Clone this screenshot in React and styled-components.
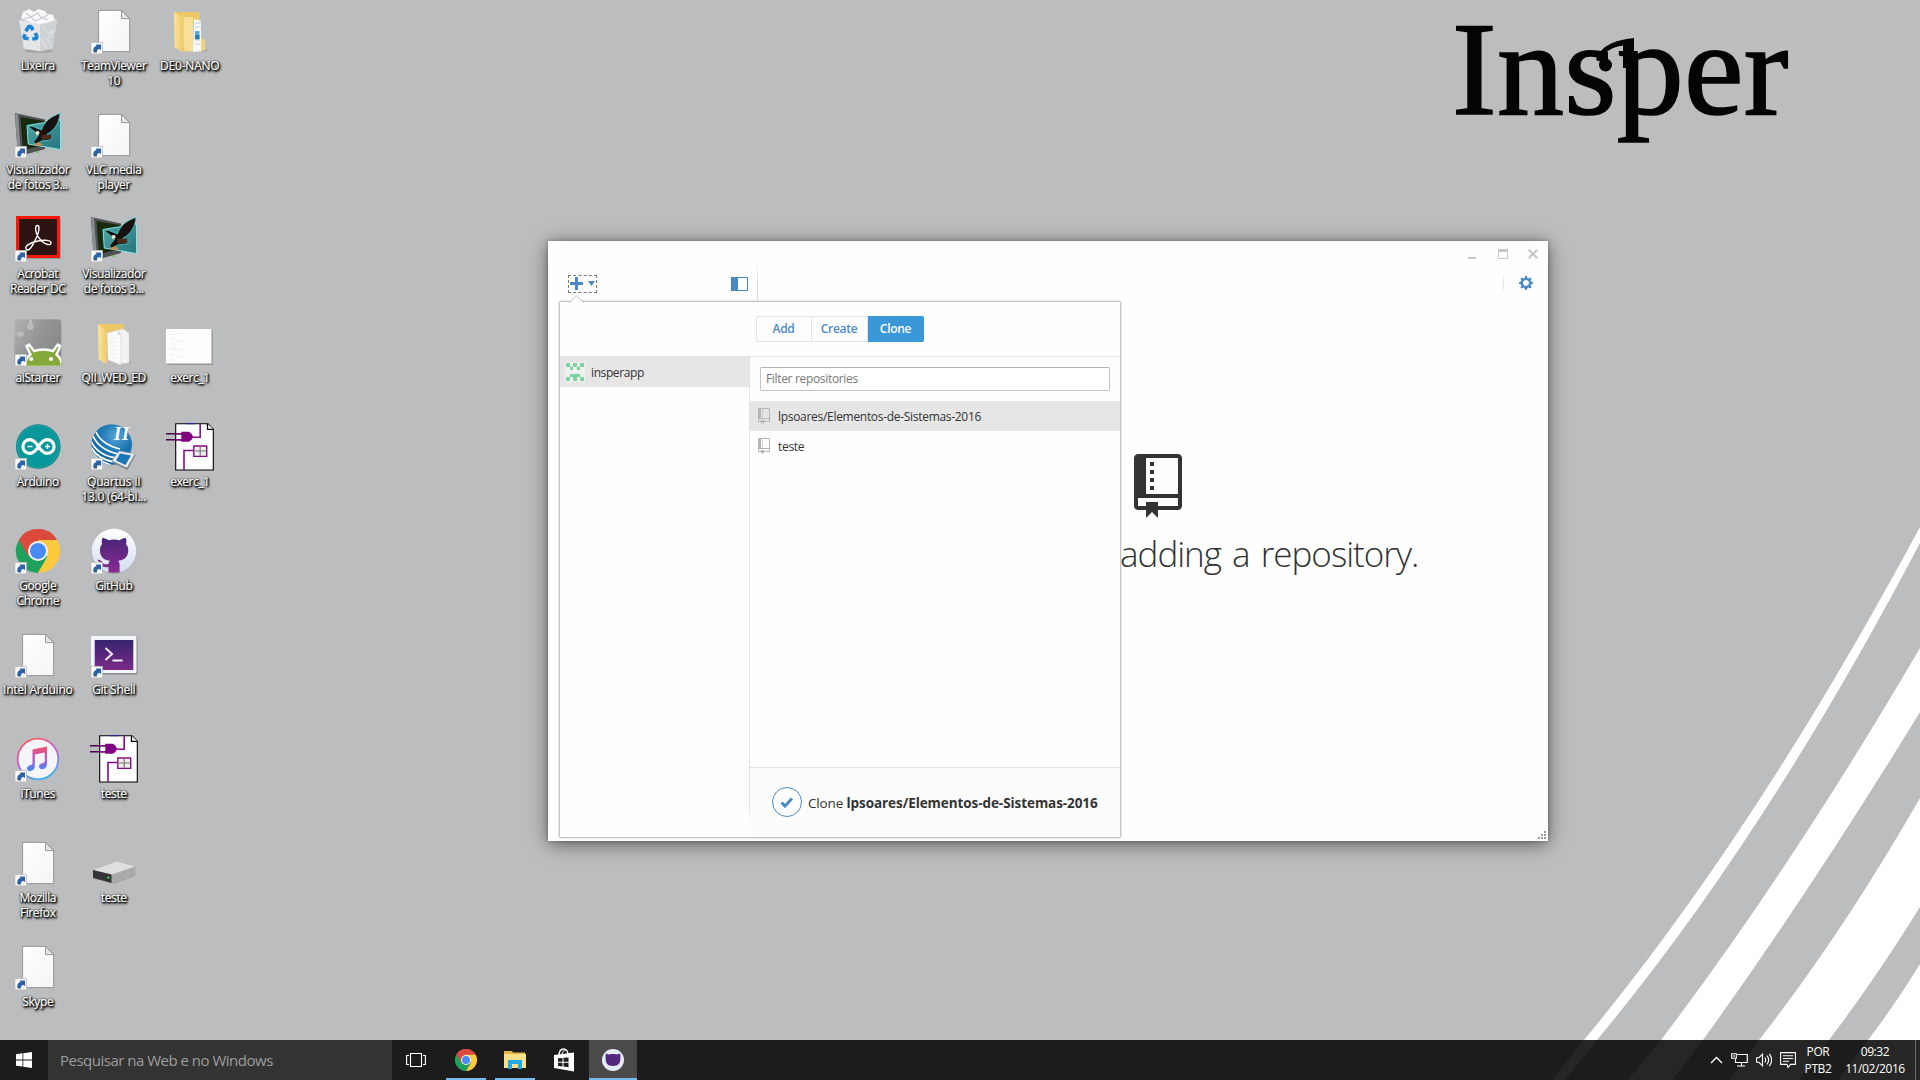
import React from 'react';
import styled, { createGlobalStyle, css } from 'styled-components';

const UI = '"Open Sans", "Noto Sans", sans-serif';

const GlobalStyle = createGlobalStyle`
  * { box-sizing: border-box; }
  body { margin: 0; font-family: ${UI}; font-size: 12px; overflow: hidden; }
`;

/* ---------- desktop ---------- */

const Desktop = styled.main`
  position: relative;
  width: 1920px;
  height: 1080px;
  overflow: hidden;
  background: #bcbdbf;
  display: flex;
  flex-direction: column;
`;

const Wallpaper = styled.svg`
  position: absolute;
  inset: 0;
  width: 1920px;
  height: 1080px;
`;

const Brand = styled.div`
  position: absolute;
  left: 1452px;
  top: 2px;
  font: 134px/134px "Liberation Serif", serif;
  color: #030405;
  -webkit-text-stroke: 1.7px #030405;
  letter-spacing: 0.3px;
  white-space: nowrap;
`;

const IconGrid = styled.div`
  position: relative;
  flex: 1;
  display: grid;
  grid-template-columns: repeat(3, 76px);
  grid-template-rows: repeat(10, 104px);
`;

const Shortcut = styled.div`
  grid-column: ${p => p.$col};
  grid-row: ${p => p.$row};
  display: flex;
  flex-direction: column;
  align-items: center;
  padding-top: 7px;

  svg { display: block; width: 48px; height: 48px; overflow: visible; }
`;

const Label = styled.span`
  margin-top: 3px;
  padding-right: 0.5px;
  font-size: 12px;
  line-height: 15px;
  letter-spacing: ${p => p.$track ?? -0.4}px;
  color: #fff;
  text-align: center;
  white-space: pre;
  -webkit-text-stroke: 0.2px #fff;
  text-shadow: 0 0 2px #000, 1px 1px 2px #000, 1px 1px 2px #000, 1px 2px 3px rgba(0, 0, 0, 0.7);
`;

const ShortcutBadge = () => (
  <g>
    <rect x="1" y="35.3" width="11.6" height="11.6" fill="#fdfdfd" stroke="#b4b4b4" strokeWidth=".7" />
    <path d="M3.700 45.6C2.600 42.2 3.700 39.6 6.600 39L5.500 37.400h5.600v5.900L9.600 41.9C7.500 42.1 6.700 43.400 7 45.600z" fill="#2f63a8" />
  </g>
);

const RecycleIcon = () => (
  <svg viewBox="0 0 48 48">
    <ellipse cx="25" cy="44" rx="14" ry="1.8" fill="#8d8e90" opacity=".6" />
    <path d="M5 13L24 15 43 12 38.6 41.5 26 44.6 10 41.4z" fill="#e3e5e7" />
    <path d="M26 15L43 12 38.6 41.5 26 44.6z" fill="#cfd2d5" />
    <path d="M5 13l5 5 6-3 5 9-7 4-5 13M27 17l7 9 7-3-8 9 5 8M27 31l6 11" fill="none" stroke="#f4f5f6" strokeWidth="1.2" opacity=".45" />
    <path d="M5 13L24 15.5 43 12 38 9 10 8.5z" fill="#b9bdc1" />
    <path d="M7 12l2-7 6-3 5 3 4-3 7 2 2 3 6 1 2 5-8 3-9 1z" fill="#f8f9fa" />
    <path d="M12 6l5 4 7-4 3 5 7-3M9 12l8-2 4 4 7-3 6 2" fill="none" stroke="#c5c9cd" strokeWidth="1.1" />
    <g fill="none" stroke="#1f83d6" strokeWidth="3.6">
      <path d="M11.800 24.300l2.600-4.300c.6-1 2.200-1 2.800 0l1.800 3.200" />
      <path d="M21.300 26l1.400 3.200c.5 1.400-.4 2.600-1.800 2.600h-2.600" />
      <path d="M14.600 31.800l-3.200-.5c-1.200-.3-1.500-1.500-1-2.500l.8-1.600" />
    </g>
  </svg>
);

const PageIcon = () => (
  <svg viewBox="0 0 48 48">
    <defs>
      <linearGradient id="page" x1="0" y1="0" x2="1" y2="1">
        <stop offset="0" stopColor="#ffffff" />
        <stop offset="1" stopColor="#f3f5f7" />
      </linearGradient>
    </defs>
    <path d="M8.6 3.4h23l8 8v33.2h-31z" fill="url(#page)" stroke="#8f9092" strokeWidth=".9" />
    <path d="M31.5 3.5v8.1h8.1z" fill="#e4e5e6" stroke="#8f9092" strokeWidth=".9" />
    <ShortcutBadge />
  </svg>
);

const FolderIcon = ({ variant }) => (
  <svg viewBox="0 0 48 48">
    <defs>
      <linearGradient id="folder" x1="0" y1="0" x2="1" y2="0">
        <stop offset="0" stopColor="#fbe59c" />
        <stop offset="1" stopColor="#efc968" />
      </linearGradient>
    </defs>
    <path d="M30 44l13-2-3 3z" fill="#999" opacity=".4" />
    <path d="M8 5h25.5v10H8z" fill="#ecc765" />
    {variant === 'photos' ? (
      <g>
        <path d="M33 10v20l6 3v10l-7 2V10z" fill="#f1d37d" />
        <path d="M28 12l7 2v30l-8 1z" fill="#f7f9fb" />
        <path d="M29 16h6M29 20h6M29 33h5M29 37h5" stroke="#c2cdd6" strokeWidth="1" />
        <path d="M29 24h4.500v8.500H29z" fill="#5aa9d2" />
        <path d="M29 28h4.500v4H29z" fill="#2b7fae" />
        <path d="M14 10l13 2v31l-9 2z" fill="#f3d67f" />
        <path d="M18 10h9v33l-3 2-6-6z" fill="#f9e096" />
      </g>
    ) : (
      <g>
        <path d="M27 11l6-1 6 4v30l-12 1z" fill="#f4f4f3" stroke="#cfcfcf" strokeWidth=".5" />
        <path d="M17 14l11-3 3 5v30l-13-5z" fill="#fafafa" stroke="#c9c9c9" strokeWidth=".5" />
        <path d="M19 19h9M19 23h9M19 27h9M19 31h9M19 35h9M20 39h8M32 19h6M32 24h6M32 29h6M32 34h6" stroke="#ebebeb" strokeWidth=".7" />
        <path d="M28 11v5h3" fill="#d6d6d6" />
      </g>
    )}
    <path d="M8 5l9 7v33.6L8.600 40z" fill="url(#folder)" />
  </svg>
);

const ViewerIcon = () => (
  <svg viewBox="0 0 48 48">
    <defs>
      <linearGradient id="viewer" x1="0" y1="0" x2="1" y2="1">
        <stop offset="0" stopColor="#54a7a9" />
        <stop offset="1" stopColor="#23747c" />
      </linearGradient>
    </defs>
    <path d="M.8 2L31 8.500V38L4 45.500z" fill="#4f5153" />
    <path d="M1 2.500l3 .6L7 44l-3 1.400z" fill="#8b8e90" />
    <path d="M6.500 6L30 10v24L9 39z" fill="#182a0d" />
    <path d="M13 14l14 1v19H14z" fill="#2c5410" opacity=".7" />
    <path d="M13 14.500L46.500 9v29.500L14.300 33z" fill="url(#viewer)" stroke="#86e2e4" strokeWidth="1" />
    <path d="M46.500 2C37 6 31 9 27.500 19l-8.500-3.500-5.500-.5 7 5.500 4 4-5 6 2 3 6-3.500 8-1 3-3-6-2.500c7-3.500 13-11 13.500-21.500z" fill="#17120f" stroke="#4fe0df" strokeWidth=".7" />
    <path d="M27 24l10-.5.500 4L28 29z" fill="#4d2b1c" />
    <path d="M21.500 20.500l3.500-.5.5 3-3 1.500z" fill="#f2ead8" />
    <path d="M19 33.500l6-2.500 4 3-3 1z" fill="#c78a4a" />
    <circle cx="23.500" cy="41" r="1" fill="#3ed32b" />
    <ShortcutBadge />
  </svg>
);

const AcrobatIcon = () => (
  <svg viewBox="0 0 48 48">
    <path d="M3 3h44v41H3z" fill="#777" opacity=".45" />
    <path d="M2 1h44v42H2z" fill="#f4190b" />
    <path d="M5 4h38v36H5z" fill="#2d1212" />
    <path d="M12.500 34.500c-3-2.500 3-7 11.500-8.500 7-1.300 13-.8 13 1.700 0 3.300-5.500 2-9.500-1.700-4.500-4-6.500-10.500-5.800-13.800.5-2.400 3-2.300 3.300 0 .6 4.300-3.300 12.500-6.400 18-2.200 4-4.600 5.600-6.100 4.300z" fill="none" stroke="#fff" strokeWidth="1.400" />
    <ShortcutBadge />
  </svg>
);

const StarterIcon = () => (
  <svg viewBox="0 0 48 48">
    <defs>
      <linearGradient id="puzzle" x1="0" y1="0" x2="1" y2=".6">
        <stop offset="0" stopColor="#b2b4b5" />
        <stop offset=".5" stopColor="#949697" />
        <stop offset="1" stopColor="#858788" />
      </linearGradient>
      <clipPath id="tile"><rect x=".3" y=".3" width="47" height="47" rx="4" /></clipPath>
    </defs>
    <g clipPath="url(#tile)">
      <path d="M0 0h48v48H0z" fill="url(#puzzle)" />
      <path d="M15 0v5c-3 1-2 6 1.500 6S21 6 18 5V0M0 14h4c1-3 6-2 6 1s-5 4-6 1H0" fill="#bcbdbf" />
      <path d="M11 48c0-6 2-10 5.500-12.500L12.500 27l2.700-1.400 4.800 6.500c5-2.200 14-2.200 19 0l4.800-6.500 2.700 1.400-4 8.500c4 3 5.500 7 5.500 12.500z" fill="#85a83a" stroke="#fff" strokeWidth="2.400" />
      <circle cx="17.300" cy="40" r="2" fill="#fff" />
      <circle cx="37" cy="40" r="2" fill="#fff" />
    </g>
    <ShortcutBadge />
  </svg>
);

const ScanIcon = () => (
  <svg viewBox="0 0 48 48">
    <path d="M1 11h46v35H1z" fill="#888" opacity=".7" />
    <path d="M0 10h45.500v34.500H0z" fill="#fdfdfd" />
    <path d="M3 12.500h8M4 15h14M3 19h6M5 21h10M12 22.500h7M5 25h6M3 29h7M5 31h12M3 35h5M4 37h13M12 38.500h6M3 41h7" stroke="#f0e4f4" strokeWidth=".8" strokeDasharray="2 .8" />
  </svg>
);

const ArduinoIcon = () => (
  <svg viewBox="0 0 48 48">
    <circle cx="24.300" cy="23.500" r="22.300" fill="#077e84" />
    <circle cx="24.300" cy="23.500" r="21" fill="#0a979c" stroke="#38b9bb" strokeWidth=".6" />
    <path d="M24.500 23.500C21 18 18.500 16.600 15.800 16.600a6.900 6.900 0 000 13.800c2.700 0 5.200-1.400 8.700-6.900 3.500-5.500 6-6.900 8.700-6.900a6.900 6.900 0 010 13.800c-2.700 0-5.200-1.400-8.700-6.900z" fill="none" stroke="#fff" strokeWidth="3.200" />
    <path d="M13.500 23.500h5M31 23.500h5M33.500 21v5" stroke="#fff" strokeWidth="1.400" />
    <ShortcutBadge />
  </svg>
);

const QuartusMark = styled.text`
  font: italic bold 18px "Liberation Serif", serif;
  fill: #fff;
`;

const QuartusIcon = () => (
  <svg viewBox="0 0 48 48">
    <defs>
      <radialGradient id="globe" cx=".6" cy=".3" r=".75">
        <stop offset="0" stopColor="#5aa5d6" />
        <stop offset=".5" stopColor="#1d78b5" />
        <stop offset="1" stopColor="#0f5d98" />
      </radialGradient>
      <clipPath id="globeClip"><circle cx="21.700" cy="21.500" r="20.300" /></clipPath>
    </defs>
    <circle cx="21.700" cy="21.500" r="20.300" fill="url(#globe)" />
    <g clipPath="url(#globeClip)" fill="none" stroke="#fff" strokeWidth="1.800">
      <path d="M6 9c4 9 12 14 24 17M3 13c4 9 12 15 25 18M1 18c4 9 12 15 25 17M1 24c4 8 12 13 23 15M2 30c5 6 11 10 19 12" />
    </g>
    <path d="M22 38l7-10 16 3-8 14z" fill="#e9ecef" stroke="#9aa1a8" strokeWidth=".6" />
    <path d="M26 37.500l4-7 11 2-5.500 9.500z" fill="#1b76b8" />
    <path d="M22 38l15 7 8-14 .3 1.500L37.500 47 22 39.500z" fill="#7b838b" />
    <QuartusMark x="24" y="16.500" textLength="15">II</QuartusMark>
    <ShortcutBadge />
  </svg>
);

const CircuitIcon = () => (
  <svg viewBox="0 0 48 48">
    <path d="M9.700.700H42l5.300 5.500v40.800H9.700z" fill="#fff" stroke="#000" strokeWidth="1.100" />
    <path d="M41.500.700v5.600h5.800" fill="#fff" stroke="#000" strokeWidth="1.300" />
    <path d="M20 .700h9" stroke="#2222b0" strokeWidth="1" />
    <path d="M0 10.800h16M0 16.800h16" stroke="#4b004b" strokeWidth="1.500" />
    <path d="M10 10.800h6M10 16.800h6M25 14.200h9.200V1M18 47V27.500h9" fill="none" stroke="#880d88" strokeWidth="1.600" />
    <path d="M15.300 8.800h7.500c2.200 1 3.700 3 4.200 5-.5 2-2 4-4.200 5h-7.500z" fill="#800080" />
    <path d="M27.800 23h12.900v10.400H27.800z" fill="#eee" stroke="#880d88" strokeWidth="1.400" />
    <path d="M34.200 23.700v9M28.500 28h11.500" stroke="#777" strokeWidth="1.200" />
  </svg>
);

const ChromeShape = () => (
  <g>
    <path d="M24 24L4.900 13A22 22 0 0143.100 13z" fill="#db4a3d" />
    <path d="M24 24l9.500 5.500L24 46A22 22 0 014.900 13z" fill="#1fa15d" />
    <path d="M24 13h19.100A22 22 0 0124 46l9.500-16.500z" fill="#fdca3d" />
    <path d="M14.500 29.500L4.900 13A22 22 0 0143.100 13H24z" fill="#db4a3d" />
    <circle cx="24" cy="24" r="10" fill="#f4f4f4" />
    <circle cx="24" cy="24" r="8" fill="#4a8af4" />
  </g>
);

const ChromeIcon = () => (
  <svg viewBox="0 0 48 48"><ChromeShape /><ShortcutBadge /></svg>
);

const OCTOCAT = 'M8 0C3.58 0 0 3.58 0 8c0 3.54 2.29 6.53 5.47 7.59.4.07.55-.17.55-.38 0-.19-.01-.82-.01-1.49-2.01.37-2.53-.49-2.69-.94-.09-.23-.48-.94-.82-1.130-.28-.15-.68-.52-.01-.53.63-.01 1.080.58 1.230.82.72 1.210 1.870.87 2.330.66.07-.52.28-.87.51-1.070-1.780-.2-3.640-.89-3.640-3.950 0-.87.31-1.590.82-2.150-.08-.2-.36-1.020.08-2.120 0 0 .67-.21 2.200.82.64-.18 1.320-.27 2-.27s1.360.09 2 .27c1.530-1.040 2.200-.82 2.200-.82.44 1.100.16 1.920.08 2.120.51.56.82 1.270.82 2.150 0 3.070-1.870 3.750-3.650 3.950.29.25.54.73.54 1.480 0 1.070-.01 1.930-.01 2.200 0 .21.15.46.55.38A8.01 8.01 0 0 0 16 8c0-4.420-3.580-8-8-8z';

const GitHubIcon = () => (
  <svg viewBox="0 0 48 48">
    <defs>
      <linearGradient id="cat" x1="0" y1="0" x2="0" y2="1">
        <stop offset="0" stopColor="#3a2470" />
        <stop offset="1" stopColor="#8a2b92" />
      </linearGradient>
      <linearGradient id="disc" x1="0" y1="0" x2="0" y2="1">
        <stop offset="0" stopColor="#ffffff" />
        <stop offset="1" stopColor="#d3ddf3" />
      </linearGradient>
    </defs>
    <circle cx="24" cy="24.500" r="22.500" fill="#85868a" opacity=".6" />
    <circle cx="24" cy="24" r="21.600" fill="url(#cat)" />
    <path transform="translate(1.800 1.800) scale(2.780)" d={OCTOCAT} fill="url(#disc)" />
    <ShortcutBadge />
  </svg>
);

const GitShellIcon = () => (
  <svg viewBox="0 0 48 48">
    <defs>
      <linearGradient id="shell" x1="0" y1="0" x2="0" y2="1">
        <stop offset="0" stopColor="#35246f" />
        <stop offset="1" stopColor="#7b2a87" />
      </linearGradient>
    </defs>
    <rect x="1" y="5.500" width="46.500" height="38" rx="1" fill="#77787a" opacity=".7" />
    <rect x="1" y="5" width="45.500" height="37" rx="1" fill="#f2f5fc" />
    <path d="M4.700 9h38.600v30H4.700z" fill="url(#shell)" />
    <path d="M15.500 17l6.500 6-6.500 6M22.500 29.500h10" fill="none" stroke="#f4effa" strokeWidth="2" />
    <ShortcutBadge />
  </svg>
);

const ITunesIcon = () => (
  <svg viewBox="0 0 48 48">
    <defs>
      <linearGradient id="ring" x1=".3" y1="0" x2=".7" y2="1">
        <stop offset="0" stopColor="#fb5b62" />
        <stop offset=".45" stopColor="#c55adf" />
        <stop offset="1" stopColor="#2fb5f7" />
      </linearGradient>
      <linearGradient id="note" x1="0" y1="0" x2="0" y2="1">
        <stop offset="0" stopColor="#f6506a" />
        <stop offset=".55" stopColor="#b558d8" />
        <stop offset="1" stopColor="#3a8ff5" />
      </linearGradient>
    </defs>
    <circle cx="24" cy="24" r="20.300" fill="#f4f5f8" stroke="url(#ring)" strokeWidth="1.800" />
    <path d="M18.500 14.500L33 11.500v17.700c0 2.400-1.400 4.300-4 4.900-2.400.4-4-.8-4-2.500 0-1.900 1.600-3.100 3.800-3.500 1.400-.3 2-.6 2-2V17.500l-10 2v11.700c0 2.400-1.400 4.200-3.900 4.700-2.300.4-3.900-.8-3.900-2.500 0-1.900 1.500-3.100 3.600-3.500 1.400-.3 1.900-.6 1.900-2z" fill="url(#note)" />
    <ShortcutBadge />
  </svg>
);

const DriveIcon = () => (
  <svg viewBox="0 0 48 48">
    <path d="M22 43.500L46 34l-1 3-21 8z" fill="#8e8f91" opacity=".5" />
    <path d="M3 31l24-8.500L45.500 27v7L21.500 44 3 39z" fill="#a7a9ab" />
    <path d="M3 31l24-8.500L45.500 27.500 21.500 35.500z" fill="#dedfe1" />
    <path d="M3 31l18.500 4.500V44L3 39z" fill="#333537" />
    <path d="M17 38.500h2.500" stroke="#3fe03f" strokeWidth="1.500" />
  </svg>
);

const SHORTCUTS = [
  { col: 1, row: 1, label: 'Lixeira', Icon: RecycleIcon },
  { col: 1, row: 2, label: 'Visualizador\nde fotos 3...', Icon: ViewerIcon },
  { col: 1, row: 3, label: 'Acrobat\nReader DC', Icon: AcrobatIcon },
  { col: 1, row: 4, label: 'aiStarter', Icon: StarterIcon },
  { col: 1, row: 5, label: 'Arduino', Icon: ArduinoIcon },
  { col: 1, row: 6, label: 'Google\nChrome', Icon: ChromeIcon },
  { col: 1, row: 7, label: 'Intel Arduino', Icon: PageIcon, track: -0.25 },
  { col: 1, row: 8, label: 'iTunes', Icon: ITunesIcon },
  { col: 1, row: 9, label: 'Mozilla\nFirefox', Icon: PageIcon },
  { col: 1, row: 10, label: 'Skype', Icon: PageIcon },
  { col: 2, row: 1, label: 'TeamViewer\n10', Icon: PageIcon, track: -0.35 },
  { col: 2, row: 2, label: 'VLC media\nplayer', Icon: PageIcon },
  { col: 2, row: 3, label: 'Visualizador\nde fotos 3...', Icon: ViewerIcon },
  { col: 2, row: 4, label: 'QII_WED_ED', Icon: FolderIcon },
  { col: 2, row: 5, label: 'Quartus II\n13.0 (64-bi...', Icon: QuartusIcon, track: -0.2 },
  { col: 2, row: 6, label: 'GitHub', Icon: GitHubIcon },
  { col: 2, row: 7, label: 'Git Shell', Icon: GitShellIcon, track: -0.3 },
  { col: 2, row: 8, label: 'teste', Icon: CircuitIcon },
  { col: 2, row: 9, label: 'teste', Icon: DriveIcon },
  { col: 3, row: 1, label: 'DE0-NANO', Icon: FolderIcon, variant: 'photos', track: -0.2 },
  { col: 3, row: 4, label: 'exerc_1', Icon: ScanIcon, track: -0.5 },
  { col: 3, row: 5, label: 'exerc_1', Icon: CircuitIcon, track: -0.5 },
];

/* ---------- application window ---------- */

const Window = styled.section`
  position: absolute;
  left: 548px;
  top: 241px;
  width: 1000px;
  height: 600px;
  background: #fefefe;
  box-shadow: 0 3px 18px rgba(0, 0, 0, 0.5), 0 0 4px rgba(0, 0, 0, 0.3);
  display: flex;
  flex-direction: column;
  color: #333;
`;

const Caption = styled.header`
  height: 21px;
  display: flex;
  justify-content: flex-end;
  align-items: flex-start;
  gap: 20px;
  padding: 8px 10px 0 0;
  svg { display: block; width: 10px; height: 10px; }
`;

const Toolbar = styled.div`
  display: flex;
  height: 40px;
`;

const ToolbarSide = styled.div`
  width: 210px;
  display: flex;
  justify-content: space-between;
  align-items: flex-start;
  padding: 13px 9px 0 20px;
  border-right: 1px solid;
  border-image: linear-gradient(#fff, #ddd 50%) 1;
`;

const AddButton = styled.button`
  width: 29px;
  height: 18px;
  padding: 0;
  background: none;
  border: 1px dashed #777;
  svg { display: block; width: 27px; height: 16px; }
`;

const PanelToggle = styled.button`
  width: 17px;
  height: 14px;
  margin-top: 2px;
  padding: 0;
  background: linear-gradient(90deg, #4b89c5 6px, #fff 6px);
  border: 1px solid #4b89c5;
`;

const ToolbarMain = styled.div`
  flex: 1;
  display: flex;
  justify-content: flex-end;
  align-items: flex-start;
  padding: 11px 15px 0 0;
`;

const Settings = styled.div`
  padding: 2px 0 2px 15px;
  border-left: 1px solid;
  border-image: linear-gradient(#fff, #ddd 50%, #fff) 1;
  svg { display: block; width: 14px; height: 16px; fill: #4b89c5; }
`;

const Welcome = styled.div`
  flex: 1;
  margin-left: 572px;
  padding-top: 152px;
  overflow: hidden;
  svg { display: block; width: 48px; height: 64px; margin-left: 14px; fill: #333; }
`;

const WelcomeText = styled.h1`
  margin: 12px 0 0;
  font-size: 35px;
  line-height: 48px;
  font-weight: 300;
  letter-spacing: -1px;
  word-spacing: 3px;
  white-space: nowrap;
`;

const Grip = styled.svg`
  position: absolute;
  right: 1px;
  bottom: 1px;
  width: 10px;
  height: 10px;
  fill: #999;
`;

const Popover = styled.div`
  position: absolute;
  left: 11px;
  top: 60px;
  width: 562px;
  height: 537px;
  background: #fefefe;
  border: 1px solid #c4c4c4;
  border-radius: 2px;
  box-shadow: 0 0 2px rgba(0, 0, 0, 0.25);
  display: flex;
  flex-direction: column;
`;

const PopoverArrow = styled.svg`
  position: absolute;
  left: 9px;
  top: -7px;
  width: 15px;
  height: 8px;
`;

const PopoverHead = styled.div`
  height: 55px;
  flex: none;
  padding: 14px 0 0 196px;
  border-bottom: 1px solid #e2e2e2;
`;

const Tabs = styled.div`
  display: grid;
  grid-template-columns: 56px 56px 56px;
  height: 25px;
`;

const Tab = styled.button`
  padding: 0 1px 1px 0;
  font: 600 12px/23px ${UI};
  letter-spacing: ${p => p.$track ?? -0.3}px;
  color: #4b89c5;
  background: #fefefe;
  border: 1px solid #e2e2e2;
  & + & { border-left: 0; }
  &:first-child { border-radius: 2px 0 0 2px; }
  ${p => p.$active && css`
    padding-right: 0;
    color: #fff;
    background: #3a98d8;
    border-color: #3a98d8;
    border-radius: 0 2px 2px 0;
  `}
`;

const PopoverBody = styled.div`
  flex: 1;
  display: flex;
`;

const Accounts = styled.div`
  width: 190px;
  border-right: 1px solid;
  border-image: linear-gradient(#e2e2e2 94%, #fff 96%) 1;
`;

const Account = styled.div`
  height: 30px;
  display: flex;
  align-items: center;
  padding-left: 5px;
  gap: 6px;
  background: #e6e6e6;
  letter-spacing: -0.4px;
  svg { width: 20px; height: 20px; }
`;

const Repos = styled.div`
  flex: 1;
  display: flex;
  flex-direction: column;
`;

const FilterInput = styled.input`
  height: 24px;
  margin: 10px 10px 10px;
  padding: 0 5px 2px;
  border: 1px solid #c3c3c3;
  border-top-color: #b0b0b0;
  border-radius: 2px;
  background: #fff;
  font: 12px ${UI};
  letter-spacing: -0.33px;
  &::placeholder { color: #777; opacity: 1; }
`;

const Repo = styled.div`
  height: 30px;
  display: flex;
  align-items: center;
  padding-left: 8px;
  gap: 8px;
  letter-spacing: ${p => p.$track ?? -0.3}px;
  background: ${p => (p.$selected ? '#e6e6e6' : 'transparent')};
  svg { width: 12px; height: 16px; fill: #b5b5b5; }
`;

const CloneBar = styled.div`
  height: 70px;
  margin-top: auto;
  border-top: 1px solid #e2e2e2;
  background: #fcfcfc;
  display: flex;
  align-items: center;
  padding-left: 21px;
  gap: 5px;
  font-size: 13.5px;
  letter-spacing: -0.15px;
  white-space: pre;
  svg { width: 32px; height: 32px; margin-bottom: 1px; }
  b { letter-spacing: -0.07px; }
`;

const REPO = 'M5 9H4V8h1v1zm0-3H4v1h1V6zm0-2H4v1h1V4zm0-2H4v1h1V2zm7-1v12c0 .55-.45 1-1 1H6v2l-1.5-1.5L3 16v-2H1c-.55 0-1-.45-1-1V1c0-.55.45-1 1-1h10c.55 0 1 .45 1 1zm-1 10H1v2h2v-1h3v1h5v-2zm0-10H3v9h8V1z';
const GEAR = 'M14 8.77v-1.6l-1.94-.64-.45-1.09.88-1.84-1.13-1.13-1.81.91-1.09-.45-.69-1.92h-1.6l-.63 1.94-1.11.45-1.84-.88-1.13 1.13.91 1.81-.45 1.09L0 7.23v1.59l1.94.64.45 1.09-.88 1.84 1.13 1.13 1.81-.91 1.09.45.69 1.92h1.59l.63-1.94 1.11-.45 1.84.88 1.13-1.13-.92-1.81.47-1.09L14 8.75v.02zM7 11c-1.66 0-3-1.34-3-3s1.34-3 3-3 3 1.34 3 3-1.34 3-3 3z';

const RepoIcon = () => <svg viewBox="0 0 12 16"><path d={REPO} fillRule="evenodd" /></svg>;

const Identicon = () => (
  <svg viewBox="0 0 20 20" shapeRendering="crispEdges">
    <path d="M0 0h20v20H0z" fill="#f0f0f0" />
    {['X.X.X', '.X.X.', '.....', '.XXX.', 'X.X.X'].map((line, r) =>
      [...line].map((c, i) => c === 'X' && (
        <rect key={`${r}-${i}`} x={1.25 + i * 3.5} y={1.25 + r * 3.5} width="3.5" height="3.5" fill="#7cd3a0" />
      )))}
  </svg>
);

/* ---------- taskbar ---------- */

const Taskbar = styled.footer`
  position: relative;
  height: 40px;
  flex: none;
  display: flex;
  background: rgba(0, 0, 0, 0.85);
  color: #fff;
`;

const TaskButton = styled.button`
  width: 48px;
  height: 40px;
  margin-left: ${p => p.$gap ?? 0}px;
  padding: 0;
  border: 0;
  background: ${p => (p.$active ? '#4a4a4a' : 'transparent')};
  display: grid;
  place-items: center;
  box-shadow: ${p => (p.$active ? 'inset 0 -2px #76b9ed' : 'none')};
  ${p => p.$running && css`
    background: linear-gradient(#76b9ed, #76b9ed) 4px 38px / 40px 2px no-repeat;
  `}
  svg { display: block; overflow: visible; }
`;

const Search = styled.div`
  width: 344px;
  padding-left: 12px;
  background: #333;
  color: #9d9d9d;
  font-size: 15px;
  line-height: 40px;
  letter-spacing: -0.5px;
`;

const Tray = styled.div`
  margin-left: auto;
  display: flex;
  align-items: center;
  font-size: 12px;
  line-height: 17px;
  letter-spacing: -0.4px;
  text-align: center;
  svg { display: block; fill: none; stroke: #fff; stroke-width: 1.1; margin-right: 8px; }
`;

const Language = styled.div`
  width: 44px;
  margin-left: -8px;
`;

const Clock = styled.div`
  width: 70px;
`;

const ShowDesktop = styled.div`
  width: 5px;
  height: 40px;
  margin-left: 5px;
  border-left: 1px solid #6a6a6a;
`;

export default function App() {
  return (
    <>
      <GlobalStyle />
      <Desktop>
        <Wallpaper viewBox="0 0 1920 1080" fill="#fff">
          <path d="M1552 1080L1584 1040Q1755 834 1920 527V543Q1765 838 1597 1040L1565 1080z" />
          <path d="M1628 1080L1661 1040Q1790 870 1920 648V712Q1811 890 1703 1040L1672 1080z" />
          <path d="M1730 1080L1759 1040Q1842 934 1920 798V907Q1876 978 1829 1040L1799 1080z" />
          <path d="M1838 1080L1868 1040Q1895 1005 1920 964V1080z" />
          <path d="M1596 60C1600 47 1613 40 1634 38V68H1623V45.500C1612 47 1603 52 1601 62z" fill="#030405" />
          <circle cx="1605.500" cy="65" r="6.500" fill="#030405" />
        </Wallpaper>
        <Brand>Insper</Brand>

        <IconGrid>
          {SHORTCUTS.map(({ col, row, label, Icon, variant, track }) => (
            <Shortcut key={`${col}-${row}`} $col={col} $row={row}>
              <Icon variant={variant} />
              <Label $track={track}>{label}</Label>
            </Shortcut>
          ))}
        </IconGrid>

        <Window>
          <Caption>
            <svg viewBox="0 0 10 10"><path d="M0 8h8v2H0z" fill="#c8c8c8" /></svg>
            <svg viewBox="0 0 10 10"><path d="M0 0h10v10H0zM1 3v6h8V3z" fillRule="evenodd" fill="#c8c8c8" /></svg>
            <svg viewBox="0 0 10 10"><path d="M.8.800l8.400 8.400M9.200.800L.8 9.200" stroke="#c8c8c8" strokeWidth="2.200" /></svg>
          </Caption>
          <Toolbar>
            <ToolbarSide>
              <AddButton>
                <svg viewBox="0 0 27 16" fill="#4b89c5">
                  <path d="M6 1h3v5h5v3H9v5H6V9H1V6h5z" />
                  <path d="M19 5h7l-3.500 5z" />
                </svg>
              </AddButton>
              <PanelToggle />
            </ToolbarSide>
            <ToolbarMain>
              <Settings><svg viewBox="0 0 14 16"><path d={GEAR} /></svg></Settings>
            </ToolbarMain>
          </Toolbar>
          <Welcome>
            <RepoIcon />
            <WelcomeText>adding a repository.</WelcomeText>
          </Welcome>
          <Grip viewBox="0 0 10 10">
            <path d="M7 1h2v2H7zM7 4h2v2H7zM4 4h2v2H4zM7 7h2v2H7zM4 7h2v2H4zM1 7h2v2H1z" />
          </Grip>

          <Popover>
            <PopoverArrow viewBox="0 0 15 8">
              <path d="M1 7.500L7.500 1 14 7.500V8H1z" fill="#fefefe" />
              <path d="M.5 7.500L7.500.800l7 6.700" fill="none" stroke="#c4c4c4" />
            </PopoverArrow>
            <PopoverHead>
              <Tabs>
                <Tab>Add</Tab>
                <Tab>Create</Tab>
                <Tab $active>Clone</Tab>
              </Tabs>
            </PopoverHead>
            <PopoverBody>
              <Accounts>
                <Account><Identicon />insperapp</Account>
              </Accounts>
              <Repos>
                <FilterInput placeholder="Filter repositories" />
                <Repo $selected><RepoIcon />lpsoares/Elementos-de-Sistemas-2016</Repo>
                <Repo><RepoIcon />teste</Repo>
                <CloneBar>
                  <svg viewBox="0 0 32 32">
                    <circle cx="16" cy="16" r="14.500" fill="#fff" stroke="#4b89c5" />
                    <path d="M10.500 16.500l3.500 3.500 7-7.500" fill="none" stroke="#4b89c5" strokeWidth="3" />
                  </svg>
                  <span>Clone <b>lpsoares/Elementos-de-Sistemas-2016</b></span>
                </CloneBar>
              </Repos>
            </PopoverBody>
          </Popover>
        </Window>

        <Taskbar>
          <TaskButton>
            <svg width="16" height="16" viewBox="0 0 16 16" fill="#fff">
              <path d="M0 2.200L6.500 1.300v6.200H0zM7.300 1.200L16 0v7.500H7.300zM0 8.400h6.500v6.200L0 13.700zM7.300 8.400H16V16l-8.700-1.200z" />
            </svg>
          </TaskButton>
          <Search>Pesquisar na Web e no Windows</Search>
          <TaskButton>
            <svg width="20" height="14" viewBox="0 0 20 14" fill="none" stroke="#fff" strokeWidth="1.100">
              <path d="M4.500.500h11v13h-11zM3 2.500H.6v9H3M17 2.500h2.400v9H17" />
            </svg>
          </TaskButton>
          <TaskButton $running $gap={2}>
            <svg width="24" height="24" viewBox="0 0 48 48"><ChromeShape /></svg>
          </TaskButton>
          <TaskButton $running $gap={1}>
            <svg width="22" height="18" viewBox="0 0 22 18">
              <path d="M0 0h8l1 1.500h12V5H0z" fill="#e8b64a" />
              <path d="M0 3h22v14H0z" fill="#fbe08a" />
              <path d="M4 18V9h14v9h-4v-5H8v5z" fill="#22a8e8" />
            </svg>
          </TaskButton>
          <TaskButton $gap={1}>
            <svg width="21" height="24" viewBox="0 0 21 24">
              <path d="M5 8C5 3 7 1 9.500 1S14 3 14 7" fill="none" stroke="#fff" strokeWidth="1.400" />
              <path d="M8 7c0-3 2-5 4-5" fill="none" stroke="#fff" />
              <path d="M0 7l20-2.500v19L0 20z" fill="#fff" />
              <path d="M4 10.300l4.500-.4v3.800H4zM9.500 9.800l5-.4v4.300h-5zM4 14.700h4.500v3.800L4 18zM9.500 14.700h5v4.500l-5-.6z" fill="#1c1c1c" />
            </svg>
          </TaskButton>
          <TaskButton $active $gap={1}>
            <svg width="22" height="22" viewBox="0 0 22 22">
              <circle cx="11" cy="11" r="11" fill="#e6ebf8" />
              <path d="M4 4.500l3 1c2.500-.6 5.500-.6 8 0l3-1c.6 2 .6 3.500.3 4.500.5 5-2 8-7.300 8S3.200 14 3.700 9C3.400 8 3.400 6.500 4 4.500z" fill="#54287c" />
            </svg>
          </TaskButton>
          <Tray>
            <svg width="13" height="8" viewBox="0 0 13 8"><path d="M1 7l5.500-5.500L12 7" strokeWidth="1.400" /></svg>
            <svg width="17" height="14" viewBox="0 0 17 14">
              <path d="M5.500 1.500h10.800v8H4.500V6M.7.700h4.600v4.600H.7zM2 3h2M10.500 9.500v3.300M6 13h8" />
            </svg>
            <svg width="16" height="14" viewBox="0 0 16 14">
              <path d="M.6 4.700H3l3.500-3.500v11.600L3 9.300H.6zM8.700 4.500c1.200 1.500 1.200 3.500 0 5M11 2.700c2 2.600 2 6 0 8.600M13.300.900c2.900 3.800 2.900 8.400 0 12.200" />
            </svg>
            <svg width="16" height="17" viewBox="0 0 16 17">
              <path d="M.6.600h14.800v11.800h-4.800L8 15.500l-1-3.100H.6zM3 3.800h10M3 6.500h10M3 9.200h6" />
            </svg>
            <Language>POR<br />PTB2</Language>
            <Clock>09:32<br />11/02/2016</Clock>
            <ShowDesktop />
          </Tray>
        </Taskbar>
      </Desktop>
    </>
  );
}
